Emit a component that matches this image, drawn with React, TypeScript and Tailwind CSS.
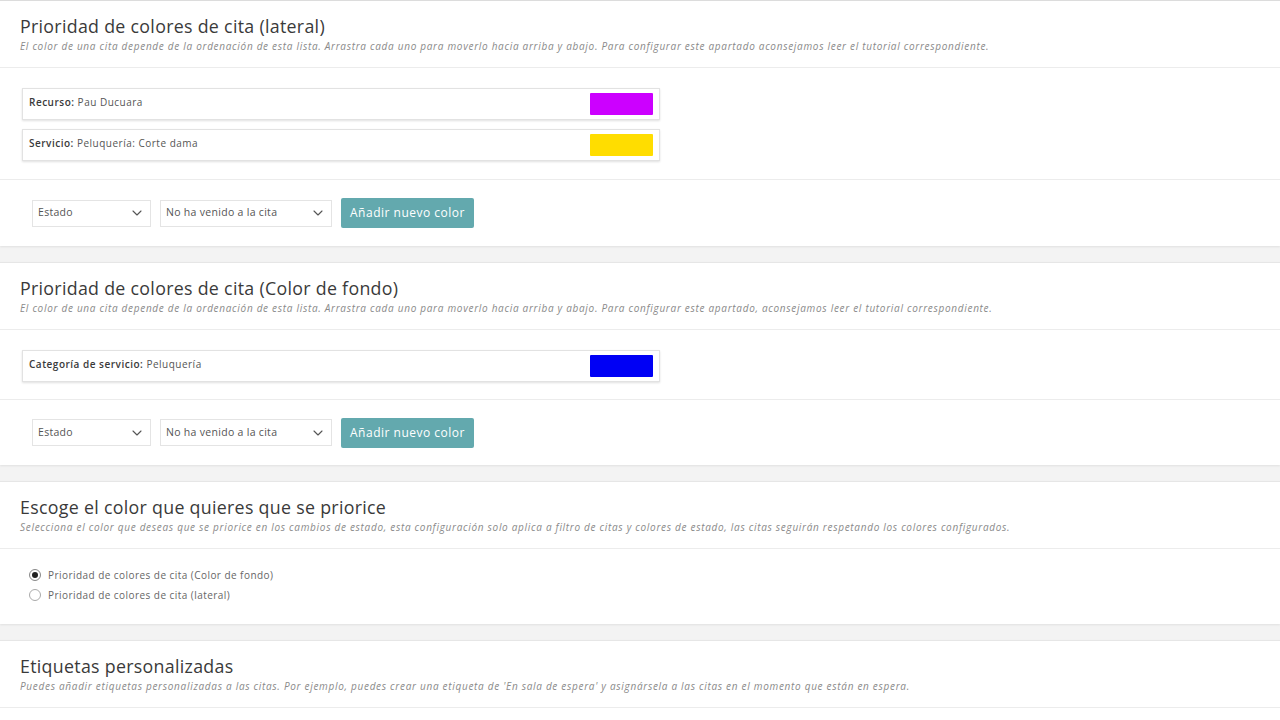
import React from "react";

const font = { fontFamily: '"Open Sans", "Noto Sans", sans-serif' };

function Chevron() {
  return (
    <svg width="10" height="6" viewBox="0 0 10 6" fill="none" className="shrink-0">
      <path d="M1 1l4 4 4-4" stroke="#555" strokeWidth="1.1" strokeLinecap="round" strokeLinejoin="round" />
    </svg>
  );
}

function Header({ title, sub }: { title: string; sub: string }) {
  return (
    <div className="h-[67px] px-5 pt-[14px] border-b border-[#ececec]">
      <div className="text-[17.8px] leading-[22px] text-[#3a3a3a] tracking-[0.3px]">{title}</div>
      <div className="text-[10px] leading-[14px] italic text-[#8a8a8a] mt-[2px] tracking-[0.7px]">{sub}</div>
    </div>
  );
}

function Item({ label, value, color }: { label: string; value: string; color: string }) {
  return (
    <div className="w-[638px] h-[32px] border border-[#e2e2e2] shadow-[0_1px_2px_rgba(0,0,0,0.12)] bg-white flex items-center justify-between pl-[6px] pr-[6px]">
      <div className="text-[10px] text-[#555] mb-[4px] tracking-[0.5px]">
        <span className="font-semibold text-[#3a3a3a]">{label}</span> {value}
      </div>
      <div className="w-[63px] h-[22px] rounded-[1px]" style={{ backgroundColor: color }} />
    </div>
  );
}

function Footer({ h }: { h: string }) {
  return (
    <div className={`${h} pl-[32px] flex items-center gap-[9px]`}>
      <div className="w-[119px] h-[27px] border border-[#e4e4e4] bg-white flex items-center justify-between px-[5px] pr-[8px] text-[10.5px] text-[#555] tracking-[0.3px]">
        <span>Estado</span>
        <Chevron />
      </div>
      <div className="w-[172px] h-[27px] border border-[#e4e4e4] bg-white flex items-center justify-between px-[5px] pr-[8px] text-[10.5px] text-[#555] tracking-[0.3px]">
        <span>No ha venido a la cita</span>
        <Chevron />
      </div>
      <div className="w-[133px] h-[30px] rounded-[2px] bg-[#63a9ae] text-white text-[12px] tracking-[0.5px] flex items-center justify-center">
        Añadir nuevo color
      </div>
    </div>
  );
}

const sub1 =
  "El color de una cita depende de la ordenación de esta lista. Arrastra cada uno para moverlo hacia arriba y abajo. Para configurar este apartado aconsejamos leer el tutorial correspondiente.";
const sub2 =
  "El color de una cita depende de la ordenación de esta lista. Arrastra cada uno para moverlo hacia arriba y abajo. Para configurar este apartado, aconsejamos leer el tutorial correspondiente.";

export default function App() {
  return (
    <div className="w-[1280px] h-[720px] overflow-hidden bg-[#f3f3f3] flex flex-col gap-[16px]" style={font}>
      <div className="bg-white border-t border-[#dcdcdc] shadow-[0_1px_2px_rgba(0,0,0,0.08)]">
        <Header title="Prioridad de colores de cita (lateral)" sub={sub1} />
        <div className="pl-[22px] pt-[20px] pb-[18px] flex flex-col gap-[9px] border-b border-[#ececec]">
          <Item label="Recurso:" value="Pau Ducuara" color="#cc00ff" />
          <Item label="Servicio:" value="Peluquería: Corte dama" color="#ffdd00" />
        </div>
        <Footer h="h-[66px]" />
      </div>

      <div className="bg-white shadow-[0_1px_2px_rgba(0,0,0,0.08)] border-t border-[#e6e6e6]">
        <Header title="Prioridad de colores de cita (Color de fondo)" sub={sub2} />
        <div className="pl-[22px] pt-[20px] pb-[17px] flex flex-col gap-[9px] border-b border-[#ececec]">
          <Item label="Categoría de servicio:" value="Peluquería" color="#0000f5" />
        </div>
        <Footer h="h-[65px]" />
      </div>

      <div className="bg-white shadow-[0_1px_2px_rgba(0,0,0,0.08)] border-t border-[#e6e6e6]">
        <Header
          title="Escoge el color que quieres que se priorice"
          sub="Selecciona el color que deseas que se priorice en los cambios de estado, esta configuración solo aplica a filtro de citas y colores de estado, las citas seguirán respetando los colores configurados."
        />
        <div className="h-[75px] pl-[29px] pt-[19px] flex flex-col gap-[6px] text-[10px] text-[#666] tracking-[0.45px]">
          <div className="flex items-center gap-[7px] h-[14px]">
            <div className="w-[12px] h-[12px] rounded-full border border-[#888] flex items-center justify-center">
              <div className="w-[6px] h-[6px] rounded-full bg-[#222]" />
            </div>
            <span>Prioridad de colores de cita (Color de fondo)</span>
          </div>
          <div className="flex items-center gap-[7px] h-[14px]">
            <div className="w-[12px] h-[12px] rounded-full border border-[#aaa]" />
            <span>Prioridad de colores de cita (lateral)</span>
          </div>
        </div>
      </div>

      <div className="bg-white shadow-[0_1px_2px_rgba(0,0,0,0.08)] border-t border-[#e6e6e6] flex-1">
        <Header
          title="Etiquetas personalizadas"
          sub="Puedes añadir etiquetas personalizadas a las citas. Por ejemplo, puedes crear una etiqueta de 'En sala de espera' y asignársela a las citas en el momento que están en espera."
        />
      </div>
    </div>
  );
}
